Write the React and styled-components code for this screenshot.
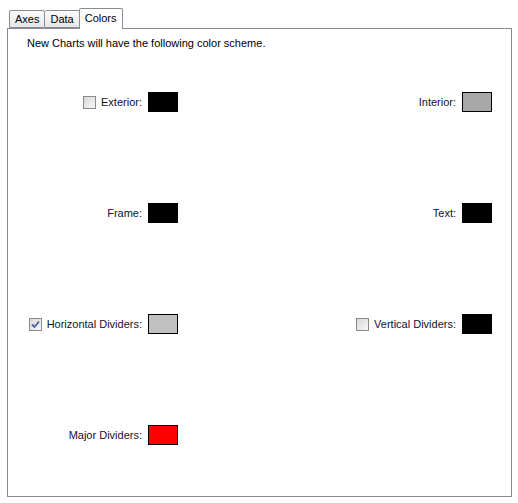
import React from 'react';
import styled, { createGlobalStyle } from 'styled-components';

const GlobalStyle = createGlobalStyle`
    html, body {
        margin: 0;
        padding: 0;
        background: #ffffff;
    }
    body {
        font-family: "Liberation Sans", Arial, sans-serif;
        font-size: 11px;
        color: #000;
    }
`;

const Window = styled.div`
    width: 518px;
    height: 503px;
    padding: 7px 6px 0 7px;
    box-sizing: border-box;
`;

const TabStrip = styled.div`
    display: flex;
    align-items: flex-end;
    height: 21px;
    padding-left: 2px;
    position: relative;
    z-index: 1;
`;

const Tab = styled.div`
    display: flex;
    align-items: center;
    justify-content: center;
    box-sizing: border-box;
    height: ${p => (p.$active ? '21px' : '18px')};
    padding: ${p => (p.$active ? '0 5px 3px' : '0 5px')};
    margin-left: ${p => (p.$active ? '-1px' : '0')};
    margin-bottom: ${p => (p.$active ? '-1px' : '0')};
    border: 1px solid #898c95;
    border-bottom: ${p => (p.$active ? 'none' : '1px solid #898c95')};
    border-left-width: ${p => (p.$first || p.$active ? '1px' : '0')};
    border-radius: 2px 2px 0 0;
    background: ${p => (p.$active ? '#ffffff' : 'linear-gradient(#fbfbfb, #e6e6e6)')};
    font-size: 11px;
    color: #000;
`;

const Panel = styled.div`
    border: 1px solid #898c95;
    height: 469px;
    box-sizing: border-box;
    padding: 7px 19px 0 0;
    background: #fff;
`;

const Intro = styled.div`
    padding-left: 19px;
    line-height: 14px;
`;

const Grid = styled.div`
    display: grid;
    grid-template-columns: 170px 1fr;
    grid-auto-rows: 20px;
    row-gap: 91px;
    margin-top: 42px;
`;

const Cell = styled.div`
    display: flex;
    align-items: center;
    justify-content: flex-end;
`;

const Box = styled.span`
    width: 13px;
    height: 13px;
    box-sizing: border-box;
    border: 1px solid #8a8a8a;
    background: linear-gradient(135deg, #d8d8d8, #f8f8f8);
    margin-right: 5px;
    display: inline-flex;
    align-items: center;
    justify-content: center;
`;

const Label = styled.span`
    margin-right: 6px;
    color: #111133;
`;

const Swatch = styled.span`
    width: 30px;
    height: 20px;
    box-sizing: border-box;
    border: 1px solid #000;
    background: ${p => p.$color};
`;

const Check = ({ checked }) => (
    <Box>
        {checked && (
            <svg width="9" height="9" viewBox="0 0 9 9">
                <path d="M1 4.5 L3.5 7 L8 1.5" fill="none" stroke="#4a5fa8" strokeWidth="1.8" />
            </svg>
        )}
    </Box>
);

const fields = [
    { label: 'Exterior:', color: '#000000', check: false },
    { label: 'Interior:', color: '#a8a8a8' },
    { label: 'Frame:', color: '#000000' },
    { label: 'Text:', color: '#000000' },
    { label: 'Horizontal Dividers:', color: '#c0c0c0', check: true },
    { label: 'Vertical Dividers:', color: '#000000', check: false },
    { label: 'Major Dividers:', color: '#ff0000' },
];

const App = () => {
    return (
        <Window>
            <GlobalStyle />
            <TabStrip>
                <Tab $first>Axes</Tab>
                <Tab>Data</Tab>
                <Tab $active>Colors</Tab>
            </TabStrip>
            <Panel>
                <Intro>New Charts will have the following color scheme.</Intro>
                <Grid>
                    {fields.map(f => (
                        <Cell key={f.label}>
                            {f.check !== undefined && <Check checked={f.check} />}
                            <Label>{f.label}</Label>
                            <Swatch $color={f.color} />
                        </Cell>
                    ))}
                </Grid>
            </Panel>
        </Window>
    );
};

export default App;
